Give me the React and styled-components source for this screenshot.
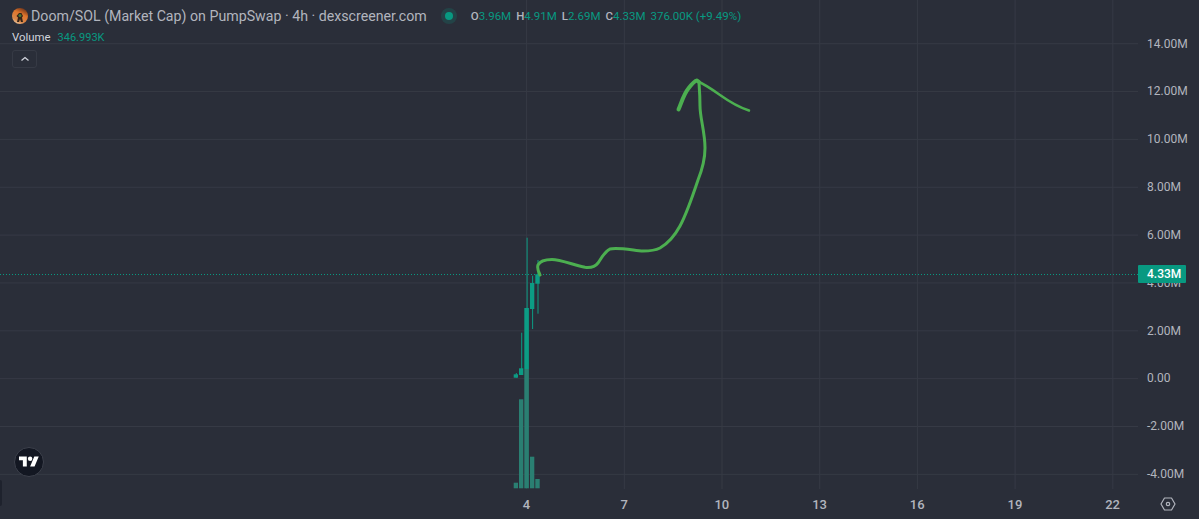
import styled, { createGlobalStyle } from "styled-components";

const GlobalStyle = createGlobalStyle`
  html, body {
    margin: 0;
    padding: 0;
    background: #2a2e39;
    overflow: hidden;
  }
`;

const Chart = styled.div`
  position: relative;
  display: grid;
  grid-template-columns: 1138px 61px;
  grid-template-rows: 489px 30px;
  width: 1199px;
  height: 519px;
  background: #2a2e39;
  font-family: Roboto, "Liberation Sans", sans-serif;
  overflow: hidden;
`;

const Plot = styled.div`
  position: relative;
  & > svg {
    display: block;
  }
`;

const Legend = styled.div`
  position: absolute;
  top: 6px;
  left: 12px;
  display: flex;
  flex-direction: column;
  align-items: flex-start;
`;

const TitleRow = styled.div`
  display: flex;
  align-items: center;
  height: 20px;
`;

const Title = styled.span`
  margin-left: 3px;
  font-size: 14.2px;
  color: #b2b5be;
  white-space: nowrap;
`;

const StatusDot = styled.span`
  width: 8px;
  height: 8px;
  margin-left: 18px;
  border-radius: 50%;
  background: #089981;
  box-shadow: 0 0 0 4px rgba(8, 153, 129, 0.2);
`;

const Ohlc = styled.div`
  display: flex;
  gap: 5px;
  margin-left: 18px;
  font-size: 11.5px;
  color: #089981;
`;

const OhlcItem = styled.span`
  & b {
    font-weight: 500;
    color: #b2b5be;
  }
`;

const VolumeRow = styled.div`
  display: flex;
  gap: 7px;
  margin-top: 1px;
  height: 20px;
  align-items: center;
  font-size: 11.4px;
  color: #d1d4dc;
`;

const VolumeValue = styled.span`
  font-size: 11px;
  color: #089981;
`;

const Collapse = styled.button`
  display: flex;
  align-items: center;
  justify-content: center;
  width: 25px;
  height: 18px;
  margin-top: 3px;
  padding: 0;
  border: 1px solid #363a45;
  border-radius: 3px;
  background: transparent;
  color: #d1d4dc;
`;

const Watermark = styled.div`
  position: absolute;
  left: 14px;
  top: 447px;
  display: flex;
  align-items: center;
  justify-content: center;
  width: 28px;
  height: 28px;
  border: 1px solid #3d414c;
  border-radius: 50%;
  background: #131722;
`;

const EdgeMark = styled.div`
  position: absolute;
  left: 0;
  top: 480px;
  width: 2px;
  height: 26px;
  border-radius: 0 2px 2px 0;
  background: #1e222d;
`;

const PriceAxis = styled.div`
  display: flex;
  flex-direction: column;
  padding: 20.5px 0 0 9px;
`;

const PriceLabel = styled.span`
  height: 47.85px;
  line-height: 47.85px;
  font-size: 12px;
  color: #b2b5be;
  flex: none;
`;

const PriceTag = styled.div`
  position: absolute;
  left: 1138px;
  top: 265px;
  width: 48px;
  height: 18px;
  box-sizing: border-box;
  padding-left: 9px;
  border-radius: 1px;
  background: #089981;
  color: #fff;
  font-size: 12px;
  font-weight: 500;
  line-height: 18px;
`;

const TimeAxis = styled.div`
  display: flex;
  align-items: center;
  padding-left: 477.65px;
`;

const TimeLabel = styled.span`
  flex: none;
  width: 97.7px;
  font-size: 13px;
  font-weight: 500;
  text-align: center;
  color: #b2b5be;
`;

const SettingsCell = styled.div`
  display: flex;
  align-items: center;
  justify-content: flex-start;
  padding-left: 22px;
`;

const prices = ["14.00M", "12.00M", "10.00M", "8.00M", "6.00M", "4.00M", "2.00M", "0.00", "-2.00M", "-4.00M"];
const times = [4, 7, 10, 13, 16, 19, 22];
const ohlc = [
  ["O", "3.96M"],
  ["H", "4.91M"],
  ["L", "2.69M"],
  ["C", "4.33M"],
];

// x, width, bodyTop, bodyBottom, wickX, wickTop, wickBottom
const candles = [
  [513.7, 4.3, 374.3, 377.7, 515.8, 373, 377.7],
  [519, 4.3, 368.3, 375, 521.2, 332.7, 375],
  [524.3, 4.6, 308, 369, 526.6, 237.7, 369],
  [530, 4.3, 283, 309, 532.1, 275.7, 329],
  [535.3, 4.4, 274.3, 283.7, 537.5, 260, 313.7],
];

// x, width, top
const volumes = [
  [513.7, 4.3, 482.7],
  [519, 4.3, 399.3],
  [524.3, 4.6, 369],
  [530, 4.3, 456.7],
  [535.3, 4.4, 479],
];

function CoinLogo() {
  return (
    <svg width="16" height="16" viewBox="0 0 16 16">
      <defs>
        <linearGradient id="coin" x1="0.7" y1="0" x2="0.2" y2="1">
          <stop offset="0%" stopColor="#6e3218" />
          <stop offset="35%" stopColor="#e0762c" />
          <stop offset="75%" stopColor="#d9884a" />
          <stop offset="100%" stopColor="#f1d3b0" />
        </linearGradient>
      </defs>
      <circle cx="8" cy="8" r="8" fill="url(#coin)" />
      <path d="M7 5h2.500l1.500 3-1 1.500 1 4.500H9L8 11l-1 3H5l1-4.500L4.500 8z" fill="#33241a" />
      <circle cx="8" cy="7.500" r="1.500" fill="#4d7a34" />
    </svg>
  );
}

function TvLogo() {
  return (
    <svg width="20" height="16" viewBox="0 0 36 28" fill="#fff">
      <path d="M14 22H7V11H0V4h14v18zM28 22h-8l7.500-18h8L28 22z" />
      <circle cx="20" cy="8" r="4" />
    </svg>
  );
}

function GearIcon() {
  return (
    <svg width="16" height="14" viewBox="0 0 16 14" fill="none" stroke="#b2b5be" strokeWidth="1.200">
      <path d="M4.500 1h7L15 7l-3.500 6h-7L1 7z" strokeLinejoin="round" />
      <circle cx="8" cy="7" r="1.700" />
    </svg>
  );
}

function ChartDrawing() {
  return (
    <svg width="1138" height="489" viewBox="0 0 1138 489">
      {prices.map((p, i) => (
        <line key={p} x1="0" x2="1138" y1={43.7 + i * 47.85} y2={43.7 + i * 47.85} stroke="#363a45" />
      ))}
      {times.map((t, i) => (
        <line key={t} x1={526.6 + i * 97.7} x2={526.6 + i * 97.7} y1="0" y2="489" stroke="#363a45" />
      ))}

      {volumes.map(([x, w, top]) => (
        <rect key={x} x={x} y={top} width={w} height={488.300 - top} fill="#2a7f72" />
      ))}

      {candles.map(([x, w, top, bottom, wx, wt, wb]) => (
        <g key={x} fill="#0c9c84">
          <rect x={wx} y={wt} width="1" height={wb - wt} />
          <rect x={x} y={top} width={w} height={bottom - top} />
        </g>
      ))}

      <line x1="0" x2="1138" y1="274.500" y2="274.500" stroke="#089981" strokeDasharray="1 2" />

      <g fill="none" stroke="#4caf50" strokeLinecap="round" strokeLinejoin="round">
        <path
          strokeWidth="3"
          d="M540 275C538 271 537 268 538 265C540 261 546 259.500 552 259.500C560 259.500 574 265 585 267.300C591 268 595 267 598 263C601 259 604 252 610 249C616 247 632 250 643 251C650 251 656 250 660 248C667 244 674 237 680 226C687 213 693 195 698 180C702 170 705 160 705 148C705 132 700 118 700 106C700 96 699.500 90 699 83"
        />
        <path strokeWidth="2.500" d="M698 81.500C706 85 713 90 720 95C727 100 738 107 749 110.500" />
        <path strokeWidth="4" d="M678.500 109.500C682 101 684 94 688 89C691 85 694 81 697 80.500L699 82" />
      </g>
    </svg>
  );
}

export default function App() {
  return (
    <>
      <GlobalStyle />
      <Chart>
        <Plot>
          <ChartDrawing />
          <Legend>
            <TitleRow>
              <CoinLogo />
              <Title>Doom/SOL (Market Cap) on PumpSwap · 4h · dexscreener.com</Title>
              <StatusDot />
              <Ohlc>
                {ohlc.map(([k, v]) => (
                  <OhlcItem key={k}>
                    <b>{k}</b>
                    {v}
                  </OhlcItem>
                ))}
                <span>376.00K (+9.49%)</span>
              </Ohlc>
            </TitleRow>
            <VolumeRow>
              Volume
              <VolumeValue>346.993K</VolumeValue>
            </VolumeRow>
            <Collapse aria-label="Collapse">
              <svg width="10" height="6" viewBox="0 0 10 6" fill="none" stroke="currentColor" strokeWidth="1.300">
                <path d="M1.500 4.500 5 1.500l3.500 3" />
              </svg>
            </Collapse>
          </Legend>
          <Watermark>
            <TvLogo />
          </Watermark>
          <EdgeMark />
        </Plot>
        <PriceAxis>
          {prices.map((p) => (
            <PriceLabel key={p}>{p}</PriceLabel>
          ))}
        </PriceAxis>
        <TimeAxis>
          {times.map((t) => (
            <TimeLabel key={t}>{t}</TimeLabel>
          ))}
        </TimeAxis>
        <SettingsCell>
          <GearIcon />
        </SettingsCell>
        <PriceTag>4.33M</PriceTag>
      </Chart>
    </>
  );
}
